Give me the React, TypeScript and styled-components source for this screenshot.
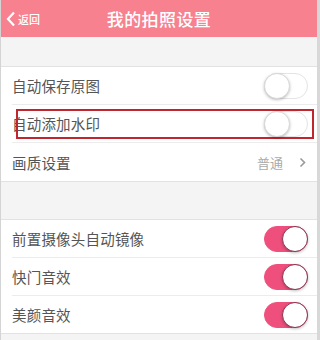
import React from "react";
import styled, { createGlobalStyle } from "styled-components";

const Global = createGlobalStyle`
  html, body { margin: 0; padding: 0; background: #fff; }
  body { font-family: "Noto Sans CJK SC", "Noto Sans", sans-serif; }
  * { box-sizing: border-box; }
`;

const Page = styled.div`
  width: 320px;
  height: 340px;
  overflow: hidden;
  background: #f4f4f4;
  border-left: 1px solid #d4d4d4;
  border-right: 3px solid #d8d8d8;
  display: flex;
  flex-direction: column;
`;

const Header = styled.div`
  height: 37px;
  background: #f7818f;
  display: grid;
  grid-template-columns: 60px 1fr 60px;
  align-items: center;
  color: #fff;
`;

const Back = styled.div`
  display: flex;
  align-items: center;
  gap: 2px;
  padding-left: 5px;
  font-size: 11px;
  font-weight: 500;
`;

const Title = styled.div`
  text-align: center;
  font-size: 17px;
  font-weight: 500;
  letter-spacing: 0.4px;
`;

const Gap = styled.div<{ $h: number }>`
  height: ${(p) => p.$h}px;
  flex-shrink: 0;
  border-bottom: 1px solid #e2e2e2;
`;

const Group = styled.div`
  background: #fff;
  display: flex;
  flex-direction: column;
  border-bottom: 1px solid #e2e2e2;
`;

const Row = styled.div<{ $h: number; $last?: boolean }>`
  height: ${(p) => p.$h}px;
  margin-left: 11px;
  padding-right: 9px;
  display: flex;
  align-items: center;
  justify-content: space-between;
  position: relative;
  border-bottom: ${(p) => (p.$last ? "none" : "1px solid #ececec")};
`;

const Label = styled.span`
  font-size: 14.5px;
  color: #555;
  letter-spacing: 0.2px;
`;

const Value = styled.div`
  display: flex;
  align-items: center;
  gap: 16px;
  color: #aaa;
  font-size: 13px;
  padding-right: 2px;
`;

const Highlight = styled.div`
  position: absolute;
  left: 4px;
  right: 3px;
  top: 4px;
  bottom: 3px;
  border: 2px solid #c0262d;
  pointer-events: none;
`;

const Track = styled.div<{ $on: boolean }>`
  width: 44px;
  height: 26px;
  border-radius: 13px;
  position: relative;
  background: ${(p) => (p.$on ? "#ef4f7c" : "#fff")};
  border: 1px solid ${(p) => (p.$on ? "#ef4f7c" : "#e4e4e4")};
  flex-shrink: 0;
`;

const Knob = styled.div<{ $on: boolean }>`
  position: absolute;
  top: -1px;
  left: ${(p) => (p.$on ? "17px" : "-1px")};
  width: 26px;
  height: 26px;
  border-radius: 50%;
  background: #fff;
  border: 1px solid ${(p) => (p.$on ? "#8a3550" : "#d8d8d8")};
  box-shadow: 0 1px 3px rgba(0, 0, 0, 0.25);
`;

const Toggle = ({ on }: { on: boolean }) => (
  <Track $on={on}>
    <Knob $on={on} />
  </Track>
);

const Chevron = () => (
  <svg width="7" height="11" viewBox="0 0 7 11">
    <path d="M1.5 1.5 L5.5 5.5 L1.5 9.5" fill="none" stroke="#999" strokeWidth="1.6" />
  </svg>
);

export default function App() {
  return (
    <>
      <Global />
      <Page>
        <Header>
          <Back>
            <svg width="10" height="16" viewBox="0 0 10 16">
              <path d="M8 1.5 L2 8 L8 14.5" fill="none" stroke="#fff" strokeWidth="2.2" />
            </svg>
            <span>返回</span>
          </Back>
          <Title>我的拍照设置</Title>
          <div />
        </Header>
        <Gap $h={30} />
        <Group>
          <Row $h={38}>
            <Label>自动保存原图</Label>
            <Toggle on={false} />
          </Row>
          <Row $h={38}>
            <Highlight />
            <Label>自动添加水印</Label>
            <Toggle on={false} />
          </Row>
          <Row $h={38} $last>
            <Label>画质设置</Label>
            <Value>
              <span>普通</span>
              <Chevron />
            </Value>
          </Row>
        </Group>
        <Gap $h={38} />
        <Group>
          <Row $h={38}>
            <Label>前置摄像头自动镜像</Label>
            <Toggle on />
          </Row>
          <Row $h={38}>
            <Label>快门音效</Label>
            <Toggle on />
          </Row>
          <Row $h={37} $last>
            <Label>美颜音效</Label>
            <Toggle on />
          </Row>
        </Group>
      </Page>
    </>
  );
}
